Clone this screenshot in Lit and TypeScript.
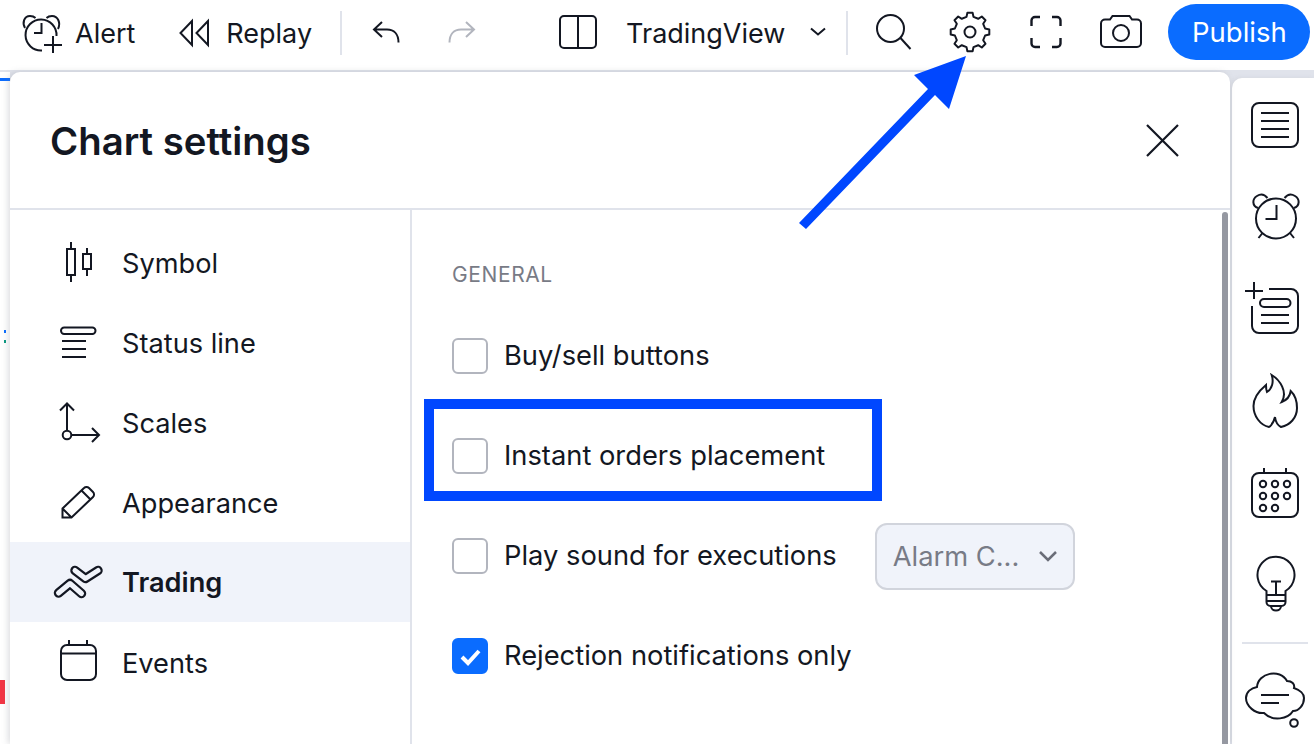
import { LitElement, html, css, svg } from 'lit';
import { customElement } from 'lit/decorators.js';

// svg boxes use page coordinates in their viewBox, so numbers read straight off the screenshot
const icon = (x: number, y: number, w: number, h: number, body: unknown) => html`
  <svg class="ic" viewBox="${x} ${y} ${w} ${h}" width=${w} height=${h}>${body}</svg>
`;

function gearPath(cx: number, cy: number, inner: number, outer: number, teeth: number) {
  const pts: string[] = [];
  const step = (Math.PI * 2) / teeth;
  for (let i = 0; i < teeth; i++) {
    const a = -Math.PI / 2 + i * step;
    const add = (r: number, d: number) =>
      pts.push(`${(cx + r * Math.cos(a + d)).toFixed(1)} ${(cy + r * Math.sin(a + d)).toFixed(1)}`);
    add(inner, -step * 0.29);
    add(outer, -step * 0.17);
    add(outer, step * 0.17);
    add(inner, step * 0.29);
  }
  return 'M' + pts.join(' L') + 'Z';
}

const tradingBand = 'M75 570.5 85.5 578.5 98 570.5M58.5 593 70 583.5 81.5 593.5';

const sideIcons = [
  svg`<path d="M67 249h8v26h-8zM71 242v7M71 275v7M83 254h8v15h-8zM87 248v6M87 269v7"/>`,
  svg`<rect x="61" y="327.5" width="34.5" height="6.5" rx="3.2"/><path d="M62 341h24M62 349h24M62 357h24"/>`,
  svg`<path d="M67 404v27M60 410.5l7-7 7 7M71.5 435H98.5M92 428l7 7-7 7"/><circle cx="67" cy="435" r="4.3"/>`,
  svg`<path d="M62.5 508.5 84 488a3.5 3.5 0 0 1 5 0l4 4a3.5 3.5 0 0 1 0 5L71.5 517.5h-9zM62.5 508.5l9 9M81.5 490.5l9 9"/>`,
  svg`<g stroke-linecap="round" stroke-linejoin="round" fill="none"><path stroke-width="9.5" d=${tradingBand}/><path stroke="#f0f3fa" stroke-width="5" d=${tradingBand}/></g>`,
  svg`<rect x="61" y="645" width="35" height="35" rx="6"/><path d="M61 653.5h35M69 640v5M87 640v5"/>`,
];

const side = ['Symbol', 'Status line', 'Scales', 'Appearance', 'Trading', 'Events'];

const railIcons = [
  svg`<rect x="1252" y="103" width="46" height="44" rx="7"/><path d="M1261 113h28M1261 121h28M1261 129h28M1261 137h28"/>`,
  svg`<circle cx="1276" cy="218.5" r="20"/><path d="M1276.5 205v14h-11M1258 208c-6-2-6-9-1-12 4-2.5 8-1 10.5 2M1294 208c6-2 6-9 1-12-4-2.5-8-1-10.5 2M1258.5 238l4-5M1294 238l-4-5"/>`,
  svg`<path d="M1269 289h22a7 7 0 0 1 7 7v30a7 7 0 0 1-7 7h-32a7 7 0 0 1-7-7v-20M1254 282v17M1245 291h18M1261 315h28M1261 323h28"/><rect x="1260" y="299" width="30.5" height="8" rx="4"/>`,
  svg`<path d="M1271.7 375C1280 380 1288 392 1281.7 402C1287 400 1290 396 1290.7 391C1296 396 1297 402 1297 408C1297 418 1290 425 1281 427C1277 425 1275.5 421 1275 417C1274 421 1272 425 1269 427C1260 425 1253.5 416 1253.5 406C1253.5 397 1260 390 1266 385C1266 388 1266 390 1267 392C1272 389 1274 382 1271.7 375Z"/>`,
  svg`<rect x="1252" y="473" width="46" height="44" rx="7"/><path d="M1264 468v5M1286 468v5"/>
    ${[[1263, 484], [1275, 484], [1287, 484], [1263, 496], [1275, 496], [1287, 496], [1263, 508], [1275, 508]].map(
      ([x, y]) => svg`<circle cx=${x} cy=${y} r="3.2"/>`
    )}`,
  svg`<path d="M1266.5 595v-4a18.5 18.5 0 1 1 19 0v4zM1266.5 595v7a4 4 0 0 0 4 4h11a4 4 0 0 0 4-4v-7M1266.5 601h19M1271 606c0 6 10 6 10 0M1271 581.5h10M1276 581.5V595"/>`,
];

const cloud = svg`<path d="M1257 687C1258 673 1280 668 1287 681C1292 681 1295 684 1294 688C1300 690 1304 694 1304 698C1304 705 1299 711 1293 711C1288 719 1273 722 1264 713C1255 714 1246 706 1246 698C1246 692 1251 688 1257 687Z"/><path d="M1261 695h28M1261 703h18"/><circle cx="1294" cy="723" r="3.8"/>`;

@customElement('app-root')
export class AppRoot extends LitElement {
  static styles = css`
    :host {
      display: block;
      position: relative;
      width: 1314px;
      height: 744px;
      overflow: hidden;
      background: #fff;
      color: #131722;
      font-family: Inter, 'Liberation Sans', sans-serif;
    }
    .ic {
      display: block;
      flex: none;
      fill: none;
      stroke: #131722;
      stroke-width: 2;
      overflow: visible;
    }
    .bar {
      display: flex;
      align-items: center;
      height: 66px;
      padding: 0 0 4px 22px;
      font-size: 27px;
    }
    .bar-item {
      display: flex;
      align-items: center;
    }
    .alert { gap: 13px; }
    .replay { gap: 16px; margin-left: 44px; }
    .vsep {
      width: 2px;
      height: 44px;
      background: #e0e3eb;
    }
    .sep1 { margin-left: 28px; }
    .undo { margin-left: 29px; }
    .redo { margin-left: 46px; }
    .layout { margin-left: 82px; }
    .name { margin-left: 29px; gap: 25px; }
    .sep2 { margin-left: 20px; }
    .search { margin-left: 28px; }
    .gear { margin-left: 38px; }
    .full { margin-left: 40px; }
    .camera { margin-left: 37px; }
    .publish {
      margin: -2px 0 0 26px;
      width: 142px;
      height: 56px;
      border-radius: 28px;
      background: #0a6cff;
      color: #fff;
      display: flex;
      align-items: center;
      justify-content: center;
      font-size: 27.5px;
    }
    .main {
      display: flex;
      height: 672px;
      border-top: 2px solid #e0e3eb;
      background: #e0e3eb;
    }
    .strip {
      position: relative;
      width: 10px;
      background: #fff;
    }
    .mark { position: absolute; }
    .m-line { left: 0; top: 6px; width: 10px; height: 3px; background: #0a6cff; }
    .m-blue { left: 4px; top: 258px; width: 2px; height: 3px; background: #0a6cff; }
    .m-green { left: 4px; top: 268px; width: 2px; height: 3px; background: #089981; }
    .m-red { left: 0; top: 608px; width: 5px; height: 24px; background: #f23645; }
    .dialog {
      position: relative;
      width: 1220px;
      background: #fff;
      border-radius: 10px 10px 0 0;
      box-shadow: -2px 0 6px rgba(120, 123, 134, 0.25);
      display: flex;
      flex-direction: column;
    }
    .head {
      display: flex;
      align-items: center;
      justify-content: space-between;
      height: 136px;
      padding: 0 51px 0 40px;
      border-bottom: 2px solid #e0e3eb;
      flex: none;
    }
    h1 {
      margin: 2px 0 0;
      font-size: 38.3px;
      font-weight: 600;
    }
    .body {
      display: flex;
      flex: 1;
      min-height: 0;
    }
    .side {
      width: 400px;
      padding-top: 12px;
      border-right: 2px solid #e0e3eb;
      flex: none;
    }
    .side-item {
      display: flex;
      align-items: center;
      height: 80px;
      padding-left: 40px;
      gap: 14px;
      font-size: 27.2px;
    }
    .side-item span {
      margin-top: 2px;
    }
    .side-item.on {
      background: #f0f3fa;
      font-weight: 600;
    }
    .side-item.on span {
      margin-top: 0;
    }
    .content {
      flex: 1;
      padding: 52px 0 0 40px;
    }
    .label {
      margin: 1px 0 18px 0;
      font-size: 21px;
      line-height: 24px;
      letter-spacing: 0.6px;
      color: #787b86;
    }
    .row {
      display: flex;
      align-items: center;
      height: 100px;
      font-size: 27.3px;
    }
    .box {
      width: 36px;
      height: 36px;
      box-sizing: border-box;
      margin: 2px 16px 0 0;
      border: 2px solid #b2b5be;
      border-radius: 6px;
      flex: none;
      display: flex;
      align-items: center;
      justify-content: center;
    }
    .box.on {
      background: #0a6cff;
      border-color: #0a6cff;
    }
    .select {
      margin: 2px 0 0 38px;
      width: 200px;
      height: 67px;
      box-sizing: border-box;
      border: 2px solid #d1d4dc;
      border-radius: 12px;
      background: #f0f3fa;
      color: #787b86;
      display: flex;
      align-items: center;
      justify-content: space-between;
      padding: 0 15px 0 16px;
    }
    .scroll {
      position: absolute;
      right: 2px;
      top: 140px;
      bottom: 0;
      width: 6px;
      border-radius: 3px 3px 0 0;
      background: #9598a1;
    }
    .rail {
      margin: 6px 0 0 2px;
      width: 82px;
      background: #fff;
      border-radius: 10px 0 0 0;
      box-shadow: -2px 0 4px rgba(120, 123, 134, 0.12);
    }
    .rail-sep {
      margin: 12px 6px 0 10px;
      height: 2px;
      background: #e0e3eb;
    }
    .overlay {
      position: absolute;
      left: 0;
      top: 0;
      pointer-events: none;
    }
    .frame {
      position: absolute;
      left: 424px;
      top: 399px;
      width: 458px;
      height: 102px;
      box-sizing: border-box;
      border: 10px solid #0047ff;
    }
  `;

  renderBar() {
    return html`
      <div class="bar">
        <div class="bar-item alert">
          ${icon(22, 0, 40, 66, svg`<path d="M56.5 36A15.5 15.5 0 1 0 42 50.5M25 28C22 23 24 16 30 16C32 16 34 16.5 35.5 18M58 29C61 23 58 16 52 16C50 16 48 16.5 46.5 18M41.5 23V33H34M53 36V53M44 45H62"/>`)}
          <span>Alert</span>
        </div>
        <div class="bar-item replay">
          ${icon(180, 0, 31, 66, svg`<path d="M193 21 181.5 33 193 45ZM209 21 197.5 33 209 45Z"/>`)}
          <span>Replay</span>
        </div>
        <div class="vsep sep1"></div>
        <div class="bar-item undo">
          ${icon(372, 0, 30, 66, svg`<path d="M383 22 375 29.5 383 37M375 29.5H388C395 29.5 399.5 34 399.5 42.5"/>`)}
        </div>
        <div class="bar-item redo">
          ${icon(448, 0, 30, 66, svg`<g stroke="#b2b5be"><path d="M467 22 475 29.5 467 37M475 29.5H462C455 29.5 450.5 34 450.5 42.5"/></g>`)}
        </div>
        <div class="bar-item layout">
          ${icon(559, 0, 38, 66, svg`<rect x="560" y="16" width="36" height="32" rx="4"/><path d="M578 16v32"/>`)}
        </div>
        <div class="bar-item name">
          <span>TradingView</span>
          ${icon(810, 0, 16, 66, svg`<path d="M811 28.5l7 6 7-6"/>`)}
        </div>
        <div class="vsep sep2"></div>
        <div class="bar-item search">
          ${icon(876, 0, 36, 66, svg`<circle cx="890.5" cy="28.5" r="13.5"/><path d="M900.5 38l10 11"/>`)}
        </div>
        <div class="bar-item gear">
          ${icon(950, 0, 40, 66, svg`<path stroke-linejoin="round" d=${gearPath(970, 32, 15.5, 19.5, 8)}/><circle cx="970" cy="32" r="5.5"/>`)}
        </div>
        <div class="bar-item full">
          ${icon(1030, 0, 33, 66, svg`<path d="M1040 17h-5a3.5 3.5 0 0 0-3.5 3.5V26M1052 17h5a3.5 3.5 0 0 1 3.5 3.5V26M1040 47h-5a3.5 3.5 0 0 1-3.5-3.5V38M1052 47h5a3.5 3.5 0 0 0 3.5-3.5V38" stroke-width="2.4"/>`)}
        </div>
        <div class="bar-item camera">
          ${icon(1100, 0, 42, 66, svg`<path d="M1105 19.5H1110L1112.5 16H1129.5L1132 19.5H1137A4 4 0 0 1 1141 23.5V43A4 4 0 0 1 1137 47H1105A4 4 0 0 1 1101 43V23.5A4 4 0 0 1 1105 19.5Z"/><circle cx="1121" cy="33" r="8"/>`)}
        </div>
        <div class="publish">Publish</div>
      </div>
    `;
  }

  renderSide() {
    return html`
      <div class="side">
        ${side.map(
          (name, i) => html`
            <div class="side-item ${name === 'Trading' ? 'on' : ''}">
              ${icon(50, 222 + i * 80, 58, 80, sideIcons[i])}
              <span>${name}</span>
            </div>
          `
        )}
      </div>
    `;
  }

  renderContent() {
    const check = svg`<path d="M8 17l6 6 11-12" fill="none" stroke="#fff" stroke-width="4"/>`;
    return html`
      <div class="content">
        <div class="label">GENERAL</div>
        <div class="row"><span class="box"></span>Buy/sell buttons</div>
        <div class="row"><span class="box"></span>Instant orders placement</div>
        <div class="row">
          <span class="box"></span>Play sound for executions
          <div class="select">
            <span>Alarm C...</span>
            <svg class="ic" viewBox="0 0 20 12" width="20" height="12"><path d="M2 2l8 8 8-8" stroke="#6a6d78" stroke-width="2.5"/></svg>
          </div>
        </div>
        <div class="row">
          <span class="box on"><svg viewBox="0 0 32 32" width="32" height="32">${check}</svg></span>Rejection notifications only
        </div>
      </div>
    `;
  }

  render() {
    return html`
      ${this.renderBar()}
      <div class="main">
        <div class="strip">
          <div class="mark m-line"></div>
          <div class="mark m-blue"></div>
          <div class="mark m-green"></div>
          <div class="mark m-red"></div>
        </div>
        <div class="dialog">
          <div class="head">
            <h1>Chart settings</h1>
            ${icon(1146, 124, 33, 33, svg`<path d="M1147 125l31 31M1178 125l-31 31" stroke-width="2.2"/>`)}
          </div>
          <div class="body">
            ${this.renderSide()}
            ${this.renderContent()}
          </div>
          <div class="scroll"></div>
        </div>
        <div class="rail">
          ${railIcons.map((body, i) => icon(1232, 78 + i * 92, 82, 92, body))}
          <div class="rail-sep"></div>
          ${icon(1232, 644, 82, 90, cloud)}
        </div>
      </div>
      <div class="frame"></div>
      <svg class="overlay" width="1314" height="744">
        <polygon fill="#0047ff" points="799,223 928,89 914,75 966,56 949,109 935,95 806,229"></polygon>
      </svg>
    `;
  }
}
